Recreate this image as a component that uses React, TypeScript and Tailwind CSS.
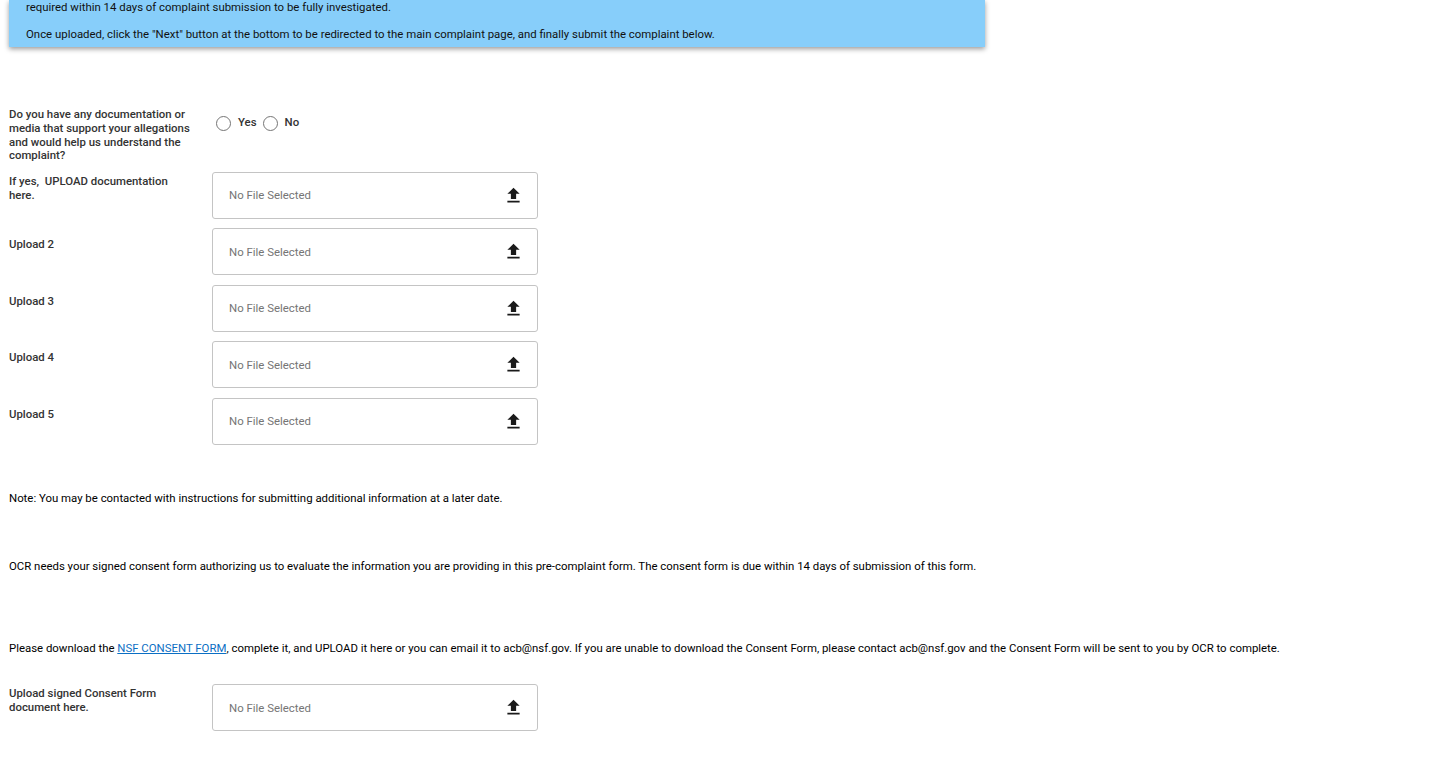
import React from "react";

function UploadIcon() {
  return (
    <svg width="21" height="21" viewBox="0 0 24 24" fill="#1a1a1a" aria-hidden="true" className="shrink-0">
      <path d="M9 16h6v-6h4l-7-7-7 7h4v6zm-4 2h14v2H5v-2z" />
    </svg>
  );
}

function UploadRow({ label, rowClass }: { label: React.ReactNode; rowClass: string }) {
  return (
    <div className={`flex items-center ${rowClass}`}>
      <div className="w-[212px] pl-[9px] pr-[28px] pb-[15px] text-[11.4px] leading-[14px] font-medium text-[#333] shrink-0">
        {label}
      </div>
      <div className="w-[326px] h-[47px] border border-[#c4c4c4] rounded-[3px] flex items-center justify-between pl-[16px] pr-[13px] bg-white">
        <span className="text-[11.4px] pt-[1px] text-[#757575]">No File Selected</span>
        <UploadIcon />
      </div>
    </div>
  );
}

function Radio({ label }: { label: string }) {
  return (
    <div className="flex items-start">
      <span className="w-[15px] h-[15px] rounded-full border border-[#757575] bg-white mt-[1px] shrink-0" />
      <span className="ml-[7px] mr-[6px] text-[11.4px] leading-[14px] font-medium text-[#333]">{label}</span>
    </div>
  );
}

export default function App() {
  return (
    <div className="w-[1430px] h-[763px] overflow-hidden bg-white font-['Roboto',sans-serif] text-[11.4px] text-black">
      <div className="ml-[9px] w-[976px] h-[47px] bg-[#87ceFA] pl-[17px] shadow-[0_2px_5px_rgba(0,0,0,0.4)] text-[#111]">
        <p className="leading-[14px]">required within 14 days of complaint submission to be fully investigated.</p>
        <p className="leading-[14px] mt-[13px]">
          Once uploaded, click the "Next" button at the bottom to be redirected to the main complaint page, and finally submit the complaint below.
        </p>
      </div>

      <div className="flex items-start mt-[61px]">
        <div className="w-[207px] pl-[9px] pr-[14px] text-[11.4px] leading-[13.8px] font-medium text-[#333] shrink-0">
          Do you have any documentation or media that support your allegations and would help us understand the complaint?
        </div>
        <div className="flex pl-[9px] pt-[7px]">
          <Radio label="Yes" />
          <Radio label="No" />
        </div>
      </div>

      <UploadRow rowClass="mt-[8.4px]" label={<>If yes,&nbsp; UPLOAD documentation here.</>} />
      <UploadRow rowClass="mt-[9.5px]" label="Upload 2" />
      <UploadRow rowClass="mt-[9.5px]" label="Upload 3" />
      <UploadRow rowClass="mt-[9.5px]" label="Upload 4" />
      <UploadRow rowClass="mt-[9.5px]" label="Upload 5" />

      <p className="ml-[9px] mt-[46.6px] leading-[14px]">
        Note: You may be contacted with instructions for submitting additional information at a later date.
      </p>
      <p className="ml-[9px] mt-[54px] leading-[14px]">
        OCR needs your signed consent form authorizing us to evaluate the information you are providing in this pre-complaint form. The consent form is due within 14 days of submission of this form.
      </p>
      <p className="ml-[9px] mt-[68px] leading-[14px]">
        Please download the <a className="text-[#0b6fc4] underline">NSF CONSENT FORM</a>, complete it, and UPLOAD it here or you can email it to acb@nsf.gov. If you are unable to download the Consent Form, please contact acb@nsf.gov and the Consent Form will be sent to you by OCR to complete.
      </p>
      <UploadRow rowClass="mt-[29px]" label="Upload signed Consent Form document here." />
    </div>
  );
}
